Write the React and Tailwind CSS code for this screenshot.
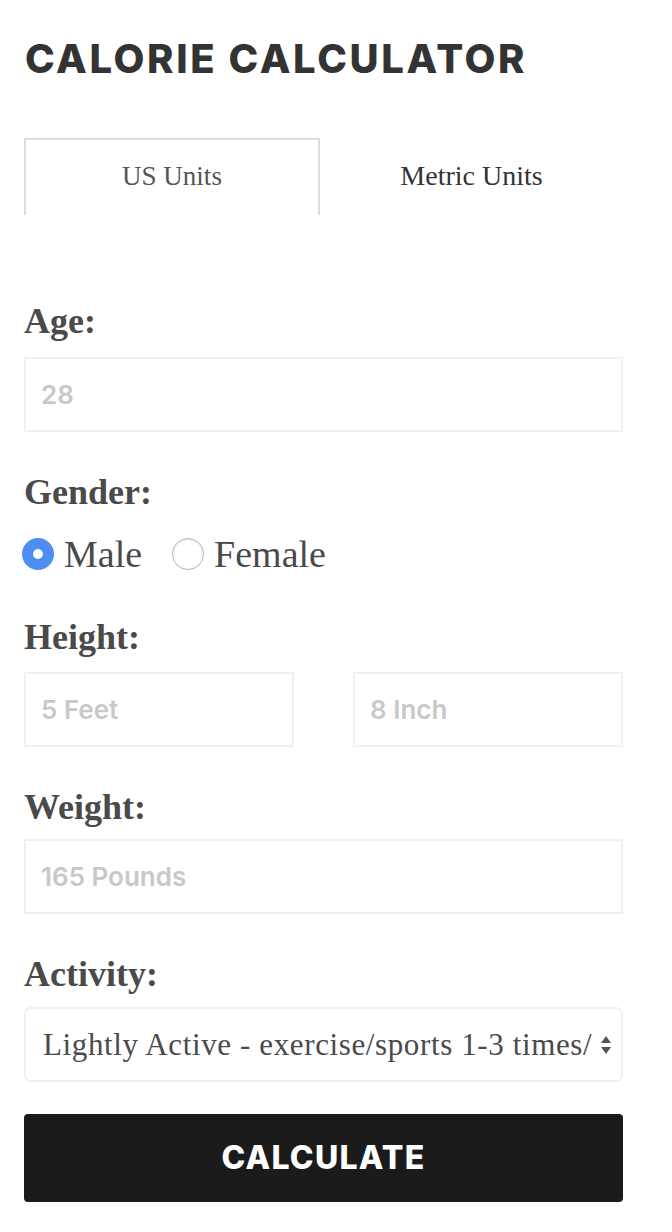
import React, { useState } from 'react'

const serif = { fontFamily: '"Liberation Serif", "DejaVu Serif", serif' }
const sans = { fontFamily: 'Inter, "Liberation Sans", sans-serif' }

function Label({ children }) {
  return (
    <div className="text-[36px] leading-[40px] font-bold text-[#4a4a4a]" style={serif}>
      {children}
    </div>
  )
}

function Field({ placeholder, className = '' }) {
  return (
    <input
      type="text"
      placeholder={placeholder}
      className={`h-[75px] border-2 border-[#f0f0f0] bg-white px-[15px] text-[26px] font-semibold text-[#444] placeholder:text-[#c8c8c8] outline-none ${className}`}
      style={sans}
    />
  )
}

function Radio({ checked, label, onClick }) {
  return (
    <button type="button" onClick={onClick} className="flex items-center gap-[10px]">
      {checked ? (
        <span className="flex h-[32px] w-[32px] items-center justify-center rounded-full bg-[#4c8ef2]">
          <span className="h-[10px] w-[10px] rounded-full bg-white" />
        </span>
      ) : (
        <span className="h-[32px] w-[32px] rounded-full border border-[#b5b5b5] bg-white shadow-[inset_0_1px_2px_rgba(0,0,0,0.1)]" />
      )}
      <span className="text-[38px] leading-[40px] text-[#4a4a4a]" style={serif}>
        {label}
      </span>
    </button>
  )
}

export default function App() {
  const [units, setUnits] = useState('us')
  const [gender, setGender] = useState('male')

  return (
    <div className="min-h-screen bg-white">
      <div className="w-[599px] ml-[24px] pt-[36px] pb-[30px]">
        <h1
          className="text-[40px] leading-[46px] font-extrabold tracking-[0.065em] text-[#333] pl-[1px]"
          style={sans}
        >
          CALORIE CALCULATOR
        </h1>

        {/* tabs */}
        <div className="mt-[56px] flex">
          <button
            onClick={() => setUnits('us')}
            className={`h-[77px] w-[296px] pb-[2px] text-[27px] text-[#555] ${units === 'us' ? 'border-2 border-b-0 border-[#dcdcdc]' : ''}`}
            style={serif}
          >
            US Units
          </button>
          <button
            onClick={() => setUnits('metric')}
            className={`h-[77px] flex-1 pb-[2px] text-[28px] text-[#333] ${units === 'metric' ? 'border-2 border-b-0 border-[#dcdcdc]' : ''}`}
            style={serif}
          >
            Metric Units
          </button>
        </div>

        <div className="mt-[86px]">
          <Label>Age:</Label>
          <Field placeholder="28" className="mt-[16px] w-full" />
        </div>

        <div className="mt-[40px]">
          <Label>Gender:</Label>
          <div className="mt-[22px] flex items-center gap-[30px] -ml-[2px]">
            <Radio checked={gender === 'male'} label="Male" onClick={() => setGender('male')} />
            <Radio checked={gender === 'female'} label="Female" onClick={() => setGender('female')} />
          </div>
        </div>

        <div className="mt-[43px]">
          <Label>Height:</Label>
          <div className="mt-[15px] flex justify-between">
            <Field placeholder="5 Feet" className="w-[270px]" />
            <Field placeholder="8 Inch" className="w-[270px]" />
          </div>
        </div>

        <div className="mt-[40px]">
          <Label>Weight:</Label>
          <Field placeholder="165 Pounds" className="mt-[12px] w-full" />
        </div>

        <div className="mt-[40px]">
          <Label>Activity:</Label>
          <div className="mt-[13px] flex h-[75px] items-center rounded-[7px] border-2 border-[#f0f0f0] bg-white pl-[17px] pr-[9px]">
            <div
              className="flex-1 overflow-hidden whitespace-nowrap text-[31px] tracking-[0.02em] leading-[40px] text-[#4a4a4a]"
              style={serif}
            >
              Lightly Active - exercise/sports 1-3 times/
            </div>
            <svg className="ml-[6px] shrink-0" width="12" height="20" viewBox="0 0 12 20">
              <path d="M6 1 L11 8 L1 8 Z" fill="#555" />
              <path d="M6 19 L11 12 L1 12 Z" fill="#555" />
            </svg>
          </div>
        </div>

        <button
          className="mt-[32px] h-[88px] w-full rounded-[4px] bg-[#1b1b1b] text-[32px] font-extrabold tracking-[0.04em] text-white"
          style={sans}
        >
          CALCULATE
        </button>
      </div>
    </div>
  )
}
